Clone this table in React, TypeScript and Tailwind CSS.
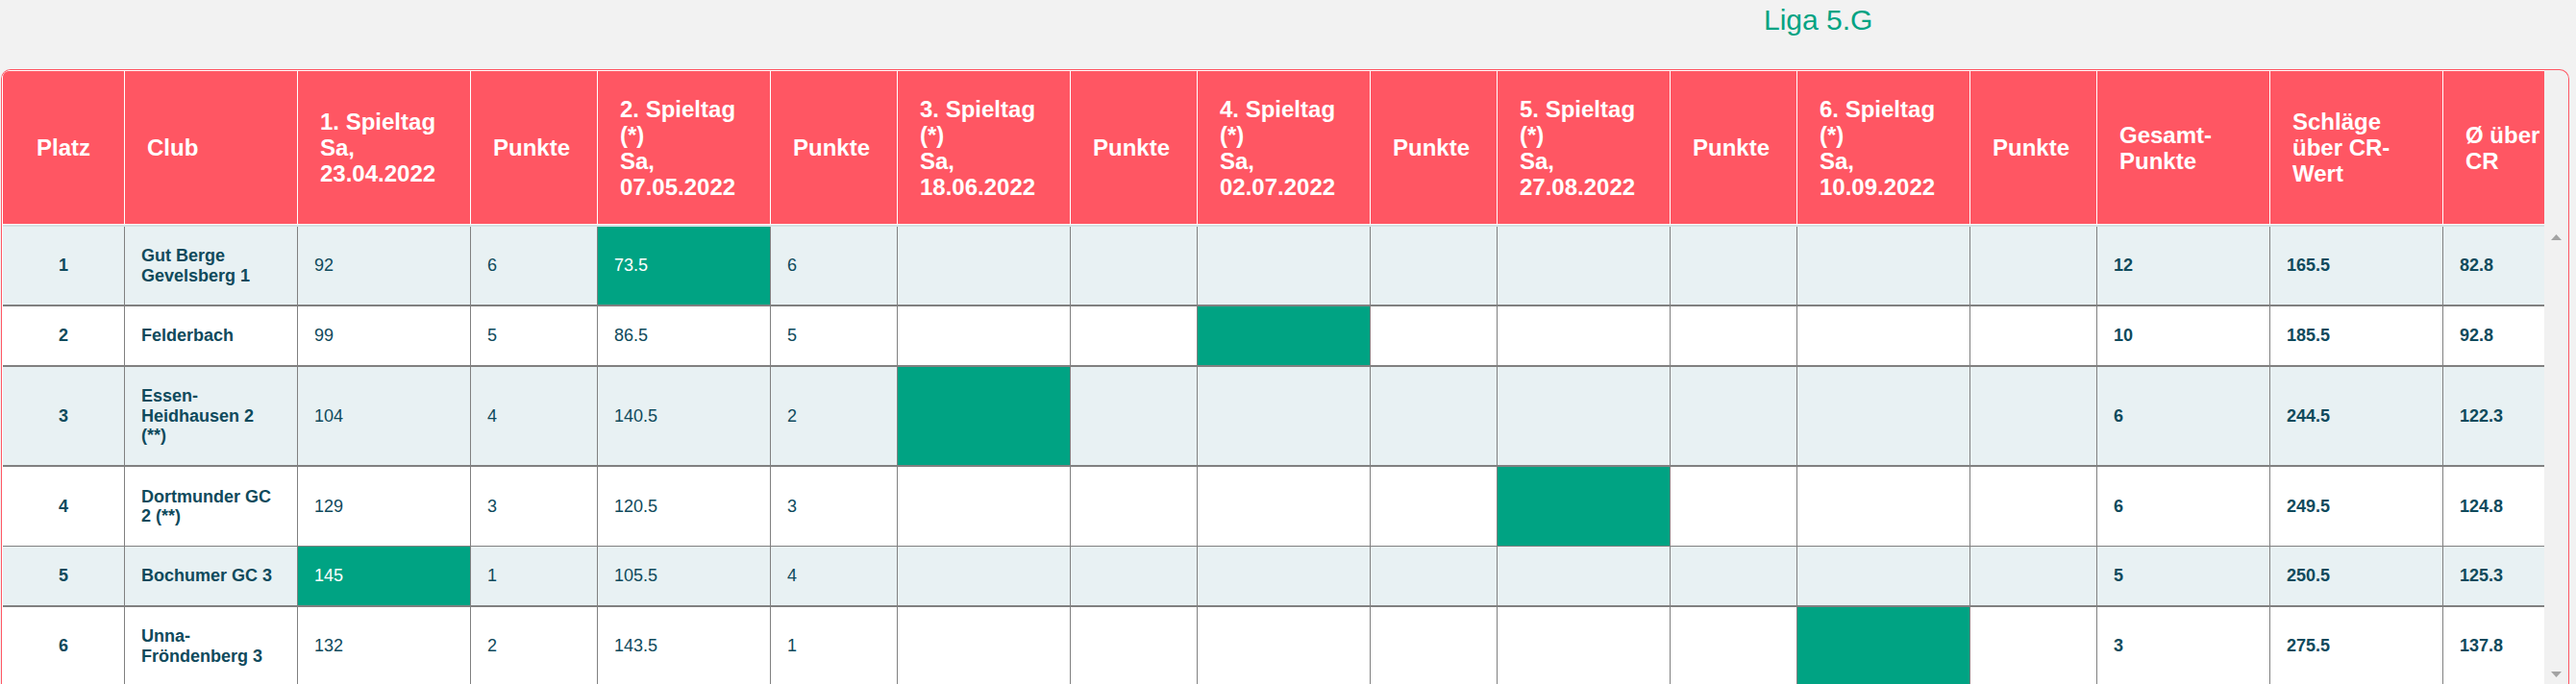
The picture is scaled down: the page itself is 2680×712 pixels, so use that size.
import React from "react";

const FONT = "font-['Liberation_Sans',Arial,sans-serif]";

const W: string[] = [
  "w-[126px]", "w-[180px]", "w-[180px]", "w-[132px]", "w-[180px]", "w-[132px]",
  "w-[180px]", "w-[132px]", "w-[180px]", "w-[132px]", "w-[180px]", "w-[132px]",
  "w-[180px]", "w-[132px]", "w-[180px]", "w-[180px]", "w-[106px]",
];

const HEAD: string[][] = [
  ["Platz"],
  ["Club"],
  ["1. Spieltag", "Sa,", "23.04.2022"],
  ["Punkte"],
  ["2. Spieltag", "(*)", "Sa,", "07.05.2022"],
  ["Punkte"],
  ["3. Spieltag", "(*)", "Sa,", "18.06.2022"],
  ["Punkte"],
  ["4. Spieltag", "(*)", "Sa,", "02.07.2022"],
  ["Punkte"],
  ["5. Spieltag", "(*)", "Sa,", "27.08.2022"],
  ["Punkte"],
  ["6. Spieltag", "(*)", "Sa,", "10.09.2022"],
  ["Punkte"],
  ["Gesamt-", "Punkte"],
  ["Schläge", "über CR-", "Wert"],
  ["Ø über", "CR"],
];

type Row = {
  h: string;
  bg: string;
  bb: string;
  green: number;
  cells: (string | string[])[];
};

const ROWS: Row[] = [
  {
    h: "h-[83px]", bg: "bg-[#e8f1f3]", bb: "border-b-2", green: 4,
    cells: ["1", ["Gut Berge", "Gevelsberg 1"], "92", "6", "73.5", "6", "", "", "", "", "", "", "", "", "12", "165.5", "82.8"],
  },
  {
    h: "h-[63px]", bg: "bg-white", bb: "border-b-2", green: 8,
    cells: ["2", ["Felderbach"], "99", "5", "86.5", "5", "", "", "", "", "", "", "", "", "10", "185.5", "92.8"],
  },
  {
    h: "h-[104px]", bg: "bg-[#e8f1f3]", bb: "border-b-2", green: 6,
    cells: ["3", ["Essen-", "Heidhausen 2", "(**)"], "104", "4", "140.5", "2", "", "", "", "", "", "", "", "", "6", "244.5", "122.3"],
  },
  {
    h: "h-[83px]", bg: "bg-white", bb: "border-b", green: 10,
    cells: ["4", ["Dortmunder GC", "2 (**)"], "129", "3", "120.5", "3", "", "", "", "", "", "", "", "", "6", "249.5", "124.8"],
  },
  {
    h: "h-[63px]", bg: "bg-[#e8f1f3]", bb: "border-b-2", green: 2,
    cells: ["5", ["Bochumer GC 3"], "145", "1", "105.5", "4", "", "", "", "", "", "", "", "", "5", "250.5", "125.3"],
  },
  {
    h: "h-[83px]", bg: "bg-white", bb: "border-b-2", green: 12,
    cells: ["6", ["Unna-", "Fröndenberg 3"], "132", "2", "143.5", "1", "", "", "", "", "", "", "", "", "3", "275.5", "137.8"],
  },
];

const BOLD = new Set([0, 1, 14, 15, 16]);

function Arrow({ up }: { up: boolean }) {
  return (
    <svg width="11" height="6" viewBox="0 0 11 6">
      {up ? (
        <polygon points="0,6 5.5,0 11,6" fill="#a3a3a3" />
      ) : (
        <polygon points="0,0 11,0 5.5,6" fill="#a3a3a3" />
      )}
    </svg>
  );
}

export default function App() {
  return (
    <div className={`w-[2680px] h-[712px] overflow-hidden bg-[#f2f2f2] flex flex-col ${FONT}`}>
      <div className="h-[72px] shrink-0 pl-[1835px] pt-[3px] text-[30px] leading-[36px] text-[#00a383]">
        Liga 5.G
      </div>
      <div className="flex-1 min-h-0 pl-[1px]">
        <div className="w-[2672px] h-full border-t border-l border-r border-[#ff5663] rounded-t-[10px] flex overflow-hidden bg-[#f1f1f1]">
          <div className="w-[2645px] shrink-0 border-t border-l border-white rounded-tl-[7px] overflow-hidden flex flex-col">
            {/* header */}
            <div className="flex h-[160px] shrink-0 border-b border-white bg-[#ff5663]">
              {HEAD.map((lines, i) => (
                <div
                  key={i}
                  className={`${W[i]} shrink-0 flex items-center text-white font-bold text-[24px] leading-[27px] whitespace-nowrap ${
                    i === 0 ? "justify-center" : "border-l border-white pl-[23px]"
                  }`}
                >
                  <div>
                    {lines.map((l, j) => (
                      <div key={j}>{l}</div>
                    ))}
                  </div>
                </div>
              ))}
            </div>
            {/* body */}
            <div className="border-t-2 border-[#d5e1e4] flex-1 bg-white">
              {ROWS.map((r, ri) => (
                <div key={ri} className={`flex ${r.h} ${r.bg} ${r.bb} border-[#808080] text-[18px] leading-[20.5px] text-[#0f4a5c]`}>
                  {r.cells.map((c, ci) => {
                    const green = ci === r.green;
                    const lines = Array.isArray(c) ? c : [c];
                    return (
                      <div
                        key={ci}
                        className={`${W[ci]} shrink-0 flex items-center whitespace-nowrap ${
                          ci === 0 ? "justify-center" : "border-l border-[#808080] pl-[17px]"
                        } ${BOLD.has(ci) ? "font-bold" : "font-normal"} ${green ? "bg-[#00a383] text-white" : ""}`}
                      >
                        <div>
                          {lines.map((l, j) => (
                            <div key={j}>{l}</div>
                          ))}
                        </div>
                      </div>
                    );
                  })}
                </div>
              ))}
            </div>
          </div>
          {/* scrollbar gutter */}
          <div className="w-[25px] shrink-0 flex flex-col items-center pt-[171px] pb-[7px]">
            <Arrow up={true} />
            <div className="flex-1" />
            <Arrow up={false} />
          </div>
        </div>
      </div>
    </div>
  );
}
